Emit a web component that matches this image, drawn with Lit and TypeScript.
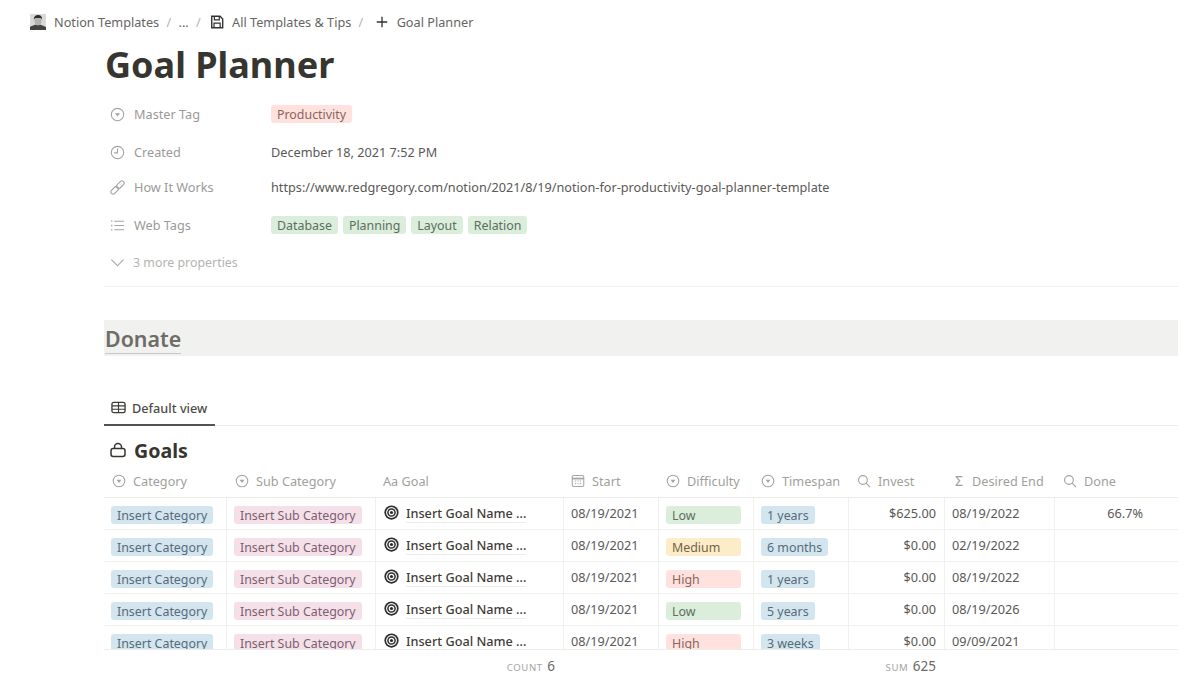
import { LitElement, html, css, svg } from "lit";
import { customElement } from "lit/decorators.js";

const selectIcon = html`<svg class="ic" viewBox="0 0 16 16"><circle cx="8" cy="8" r="6.6" fill="none" stroke="currentColor" stroke-width="1.2"/><path d="M5.2 6.6h5.6L8 10.2z" fill="currentColor"/></svg>`;
const clockIcon = html`<svg class="ic" viewBox="0 0 16 16"><circle cx="8" cy="8" r="6.6" fill="none" stroke="currentColor" stroke-width="1.2"/><path d="M8 3.6V8.4H4.4" fill="none" stroke="currentColor" stroke-width="1.2"/></svg>`;
const linkIcon = html`<svg class="ic" viewBox="0 0 16 16"><g fill="none" stroke="currentColor" stroke-width="1.2" transform="rotate(-45 8 8)"><rect x="-1" y="5.6" width="9.4" height="4.8" rx="2.4"/><rect x="7.6" y="5.6" width="9.4" height="4.8" rx="2.4"/></g></svg>`;
const listIcon = html`<svg class="ic" viewBox="0 0 16 16"><path d="M4.6 3.4H15M4.6 8H15M4.6 12.6H15" stroke="currentColor" stroke-width="1.1"/><path d="M1 3.4h1.6M1 8h1.6M1 12.6h1.6" stroke="currentColor" stroke-width="1.4"/></svg>`;
const calendarIcon = html`<svg class="ic" viewBox="0 0 16 16"><rect x="1.4" y="1.8" width="13.2" height="12.4" rx="1.6" fill="none" stroke="currentColor" stroke-width="1.2"/><path d="M1.4 5.2h13.2" stroke="currentColor" stroke-width="2"/><path d="M4.5 8h7M4.5 11h7" stroke="currentColor" stroke-width="1.1" stroke-dasharray="1.4 1.4"/></svg>`;
const searchIcon = html`<svg class="ic" viewBox="0 0 16 16"><circle cx="6.8" cy="6.8" r="5" fill="none" stroke="currentColor" stroke-width="1.3"/><path d="M10.4 10.4L15 15" stroke="currentColor" stroke-width="1.3"/></svg>`;
const targetIcon = html`<svg class="target" viewBox="0 0 16 16"><circle cx="8" cy="8" r="7.6" fill="#2b2b2b"/><circle cx="8" cy="8" r="5.8" fill="#fff"/><circle cx="8" cy="8" r="4.6" fill="#2b2b2b"/><circle cx="8" cy="8" r="3" fill="#fff"/><circle cx="8" cy="8" r="1.7" fill="#2b2b2b"/></svg>`;

const columns = [
  { label: "Category", icon: selectIcon, pad: "c1" },
  { label: "Sub Category", icon: selectIcon, pad: "c2" },
  { label: "Aa Goal", icon: null, pad: "c3" },
  { label: "Start", icon: calendarIcon, pad: "c4" },
  { label: "Difficulty", icon: selectIcon, pad: "c5" },
  { label: "Timespan", icon: selectIcon, pad: "c6" },
  { label: "Invest", icon: searchIcon, pad: "c7" },
  { label: "Desired End", icon: html`<span class="sigma">Σ</span>`, pad: "c8" },
  { label: "Done", icon: searchIcon, pad: "c9" },
];

const rows = [
  { level: "Low", color: "green", span: "1 years", invest: "$625.00", end: "08/19/2022", done: "66.7%" },
  { level: "Medium", color: "yellow", span: "6 months", invest: "$0.00", end: "02/19/2022", done: "" },
  { level: "High", color: "red", span: "1 years", invest: "$0.00", end: "08/19/2022", done: "" },
  { level: "Low", color: "green", span: "5 years", invest: "$0.00", end: "08/19/2026", done: "" },
  { level: "High", color: "red", span: "3 weeks", invest: "$0.00", end: "09/09/2021", done: "" },
];

const webTags = ["Database", "Planning", "Layout", "Relation"];

@customElement("app-root")
export class AppRoot extends LitElement {
  static styles = css`
    :host {
      display: block;
      width: 1200px;
      height: 675px;
      overflow: hidden;
      background: #fff;
      font-family: "Noto Sans", "Open Sans", sans-serif;
      font-size: 12.7px;
      color: #5a5955;
    }
    .ic {
      width: 14px;
      height: 14px;
      flex: none;
      color: #a5a4a0;
    }
    .crumbs {
      display: flex;
      align-items: center;
      height: 44px;
      padding-left: 30px;
      color: #66655f;
      font-size: 12.7px;
    }
    .avatar {
      width: 16px;
      height: 16px;
      margin-right: 8px;
    }
    .sep {
      color: #b5b4b0;
      margin: 0 7.3px;
    }
    .crumb-ic {
      width: 14px;
      height: 14px;
      margin: 0 8px 0 2px;
      color: #333;
    }
    .crumb-ic.plus {
      margin-left: 4px;
    }
    .page {
      padding: 0 22px 0 104px;
    }
    h1 {
      margin: 0 0 0 1px;
      height: 43px;
      line-height: 41px;
      font-size: 36px;
      font-weight: 700;
      color: #37352f;
    }
    .props {
      display: grid;
      grid-template-columns: 167px 1fr;
      grid-template-rows: 38px 38px 32px 44px 30px;
      margin-top: 8px;
      padding-bottom: 9px;
      border-bottom: 1px solid #efefed;
      align-items: center;
    }
    .prop-label {
      display: flex;
      align-items: center;
      gap: 9px;
      padding-left: 6px;
      color: #9b9a97;
    }
    .prop-label .ic {
      width: 15px;
      height: 15px;
    }
    .prop-value {
      display: flex;
      gap: 5px;
    }
    .more {
      grid-column: 1 / 3;
      color: #b5b4b0;
      font-size: 12.4px;
      gap: 8px;
    }
    .tag {
      display: inline-block;
      height: 18px;
      line-height: 20px;
      padding: 0 6px;
      border-radius: 3px;
      overflow: hidden;
      white-space: nowrap;
      font-size: 12.4px;
      color: #52524c;
    }
    .blue { background: #d3e5ef; color: #566c79; }
    .pink { background: #f5e0e9; color: #7a606e; }
    .green { background: #dbeddb; color: #5b6f60; }
    .red { background: #ffe2dd; color: #8b645e; }
    .yellow { background: #fdecc8; color: #73634a; }
    .donate {
      display: flex;
      align-items: center;
      height: 36px;
      margin-top: 33px;
      padding-left: 1px;
      background: #f1f1ef;
    }
    .donate span {
      font-size: 21.4px;
      font-weight: 600;
      line-height: 28px;
      margin-top: 3px;
      color: #6d6c67;
      border-bottom: 1px solid #c9c9c6;
    }
    .tabs {
      display: flex;
      height: 35px;
      margin-top: 34px;
      border-bottom: 1px solid #ececea;
    }
    .tab {
      display: flex;
      align-items: center;
      gap: 6px;
      width: 104px;
      padding: 1px 0 0 7px;
      margin-bottom: -1px;
      border-bottom: 2px solid #55544f;
      font-weight: 500;
      color: #4d4c47;
    }
    .tab .ic {
      width: 15px;
      height: 15px;
      color: #3d3c38;
    }
    .goals {
      display: flex;
      align-items: center;
      gap: 8px;
      height: 38px;
      padding: 5px 0 0 6px;
      font-size: 19.6px;
      font-weight: 700;
      color: #37352f;
    }
    .goals svg {
      width: 16px;
      height: 16px;
    }
    .grid {
      display: grid;
      grid-template-columns: 122px 149px 188px 95px 95px 95px 96px 110px 124px;
    }
    .head {
      box-sizing: border-box;
      height: 29px;
      border-bottom: 1px solid #ececea;
      color: #a19f9b;
    }
    .head > div {
      display: flex;
      align-items: center;
      gap: 7px;
      height: 24px;
      white-space: nowrap;
    }
    .c1 { padding-left: 8px; }
    .c2 { padding-left: 9px; }
    .c3 { padding-left: 8px; }
    .c4 { padding-left: 8px; }
    .c5 { padding-left: 8px; }
    .c6 { padding-left: 8px; }
    .c7 { padding-left: 9px; }
    .c8 { padding-left: 11px; gap: 9px !important; }
    .c9 { padding-left: 9px; }
    .sigma { font-size: 14px; line-height: 14px; width: 8px; }
    .body {
      height: 151px;
      overflow: hidden;
      border-bottom: 1px solid #ececea;
    }
    .row {
      height: 32px;
      box-sizing: border-box;
      border-bottom: 1px solid #f0f0ee;
    }
    .cell {
      box-sizing: border-box;
      height: 31px;
      padding: 0 7px;
      line-height: 31px;
      border-left: 1px solid #f0f0ee;
      white-space: nowrap;
    }
    .cell:first-child { border-left: 0; }
    .tagcell {
      padding-top: 8px;
      line-height: 18px;
    }
    .wide {
      display: block;
      width: 63px;
    }
    .goal {
      display: flex;
      align-items: center;
      gap: 7px;
      padding-left: 8px;
      font-weight: 500;
      color: #3f3d38;
    }
    .goal span {
      line-height: 17px;
      border-bottom: 1px solid #ecebe9;
    }
    .target {
      width: 15px;
      height: 15px;
      margin-top: -2px;
      flex: none;
    }
    .num { text-align: right; padding-right: 8px; }
    .done { text-align: right; padding-right: 35px; }
    .foot {
      height: 32px;
      align-items: center;
      font-size: 13.5px;
      color: #6b6a66;
    }
    .foot > div { text-align: right; padding-right: 8px; }
    .foot small {
      font-size: 9.6px;
      letter-spacing: 0.6px;
      color: #a5a4a0;
      margin-right: 1px;
    }
  `;

  renderAvatar() {
    return html`<svg class="avatar" viewBox="0 0 16 16">
      <rect width="16" height="16" rx="1" fill="#d9d9d7"/>
      ${svg`<path d="M0 16v-3.2L5 10.800h5.600L16 13V16z" fill="#444"/>
      <ellipse cx="8" cy="6.800" rx="3.600" ry="4.600" fill="#b4b4b1"/>
      <path d="M3.800 5.600C3.800 2.200 6 1 8.200 1s4 1.400 4 4.400L10.800 4H5.400z" fill="#2e2e2e"/>`}
    </svg>`;
  }

  renderRow(r: (typeof rows)[number]) {
    return html`<div class="grid row">
      <div class="cell tagcell"><span class="tag blue">Insert Category</span></div>
      <div class="cell tagcell"><span class="tag pink">Insert Sub Category</span></div>
      <div class="cell goal">${targetIcon}<span>Insert Goal Name ...</span></div>
      <div class="cell">08/19/2021</div>
      <div class="cell tagcell"><span class="tag wide ${r.color}">${r.level}</span></div>
      <div class="cell tagcell"><span class="tag blue">${r.span}</span></div>
      <div class="cell num">${r.invest}</div>
      <div class="cell">${r.end}</div>
      <div class="cell done">${r.done}</div>
    </div>`;
  }

  render() {
    return html`
      <div class="crumbs">
        ${this.renderAvatar()}
        <span>Notion Templates</span><span class="sep">/</span><span>...</span><span class="sep">/</span>
        <svg class="crumb-ic" viewBox="0 0 16 16"><path d="M2 1.5h9.5L14.5 4.5V14.5H2z" fill="none" stroke="currentColor" stroke-width="1.6"/><path d="M5 2v3.6h5.6V2M4.6 14.5V9.4h7v5.1" fill="none" stroke="currentColor" stroke-width="1.4"/></svg>
        <span>All Templates &amp; Tips</span><span class="sep">/</span>
        <svg class="crumb-ic plus" viewBox="0 0 16 16"><path d="M8 2v12M2 8h12" stroke="currentColor" stroke-width="1.5"/></svg>
        <span>Goal Planner</span>
      </div>
      <div class="page">
        <h1>Goal Planner</h1>
        <div class="props">
          <div class="prop-label">${selectIcon}Master Tag</div>
          <div class="prop-value"><span class="tag red">Productivity</span></div>
          <div class="prop-label">${clockIcon}Created</div>
          <div class="prop-value">December 18, 2021 7:52 PM</div>
          <div class="prop-label">${linkIcon}How It Works</div>
          <div class="prop-value">https://www.redgregory.com/notion/2021/8/19/notion-for-productivity-goal-planner-template</div>
          <div class="prop-label">${listIcon}Web Tags</div>
          <div class="prop-value">${webTags.map((t) => html`<span class="tag green">${t}</span>`)}</div>
          <div class="prop-label more">
            <svg class="ic" viewBox="0 0 16 16"><path d="M1.5 5l6.5 6.5L14.500 5" fill="none" stroke="currentColor" stroke-width="1.2"/></svg>
            3 more properties
          </div>
        </div>
        <div class="donate"><span>Donate</span></div>
        <div class="tabs">
          <div class="tab">
            <svg class="ic" viewBox="0 0 16 16"><rect x="1" y="2.500" width="14" height="11" rx="2" fill="none" stroke="currentColor" stroke-width="1.4"/><path d="M1 6.200h14M1 9.800h14M8 2.500v11" stroke="currentColor" stroke-width="1.200"/></svg>
            Default view
          </div>
        </div>
        <div class="goals">
          <svg viewBox="0 0 16 16"><rect x="1" y="6.500" width="14" height="8" rx="2.200" fill="none" stroke="#37352f" stroke-width="1.500"/><path d="M4.500 6.500V5a3.500 3.500 0 0 1 7 0v1.500" fill="none" stroke="#37352f" stroke-width="1.500"/></svg>
          Goals
        </div>
        <div class="grid head">
          ${columns.map((c) => html`<div class=${c.pad}>${c.icon}${c.label}</div>`)}
        </div>
        <div class="body">${rows.map((r) => this.renderRow(r))}</div>
        <div class="grid foot">
          <div></div><div></div>
          <div><small>COUNT</small> 6</div>
          <div></div><div></div><div></div>
          <div><small>SUM</small> 625</div>
          <div></div><div></div>
        </div>
      </div>
    `;
  }
}
